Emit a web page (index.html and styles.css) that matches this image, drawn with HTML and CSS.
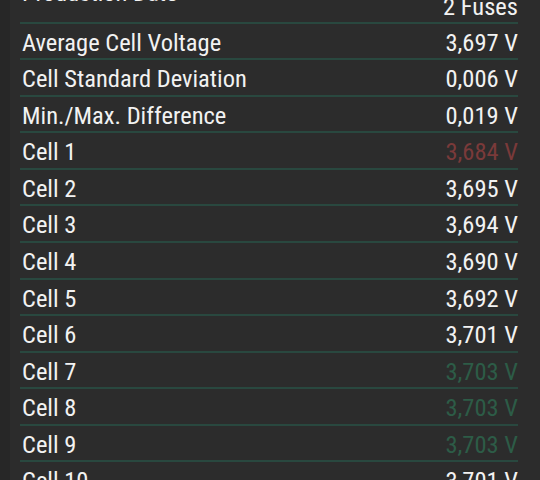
FILE: index.html
```html
<!DOCTYPE html>
<html>
<head>
<meta charset="utf-8">
<link rel="stylesheet" href="styles.css">
</head>
<body>
<div class="screen">
  <div class="list">
    <div class="row row-multi">
      <span class="label">Production Date</span>
      <span class="value"><span class="line">2021-03-15</span><span class="line">2 Fuses</span></span>
    </div>
    <div class="row"><span class="label">Average Cell Voltage</span><span class="value">3,697 V</span></div>
    <div class="row"><span class="label">Cell Standard Deviation</span><span class="value">0,006 V</span></div>
    <div class="row"><span class="label">Min./Max. Difference</span><span class="value">0,019 V</span></div>
    <div class="row"><span class="label">Cell 1</span><span class="value low">3,684 V</span></div>
    <div class="row"><span class="label">Cell 2</span><span class="value">3,695 V</span></div>
    <div class="row"><span class="label">Cell 3</span><span class="value">3,694 V</span></div>
    <div class="row"><span class="label">Cell 4</span><span class="value">3,690 V</span></div>
    <div class="row"><span class="label">Cell 5</span><span class="value">3,692 V</span></div>
    <div class="row"><span class="label">Cell 6</span><span class="value">3,701 V</span></div>
    <div class="row"><span class="label">Cell 7</span><span class="value high">3,703 V</span></div>
    <div class="row"><span class="label">Cell 8</span><span class="value high">3,703 V</span></div>
    <div class="row"><span class="label">Cell 9</span><span class="value high">3,703 V</span></div>
    <div class="row"><span class="label">Cell 10</span><span class="value">3,701 V</span></div>
    <div class="row"><span class="label">Cell 11</span><span class="value">3,700 V</span></div>
  </div>
</div>
</body>
</html>
```
FILE: styles.css
```css
html, body {
  margin: 0;
  padding: 0;
  background: #2c2c2c;
}
.screen {
  width: 540px;
  height: 480px;
  overflow: hidden;
  box-sizing: border-box;
  border-left: 10px solid #272727;
  background: #2c2c2c;
  font-family: "Roboto Condensed", Roboto, "Liberation Sans", sans-serif;
  font-stretch: condensed;
  font-size: 24.5px;
  color: #f2f2f2;
}
.list {
  margin: -36.5px 22px 0 10px;
  display: flex;
  flex-direction: column;
}
.row {
  display: flex;
  justify-content: space-between;
  align-items: center;
  border-top: 2px solid #29483f;
  padding: 4px 0 0 2px;
  line-height: 30.58px;
}
.row-multi {
  border-top: none;
  padding-bottom: 2px;
}
.row-multi .value {
  line-height: 26px;
}
.value {
  text-align: right;
  display: flex;
  flex-direction: column;
}
.low { color: #7a3a3a; }
.high { color: #2d5c47; }
```
